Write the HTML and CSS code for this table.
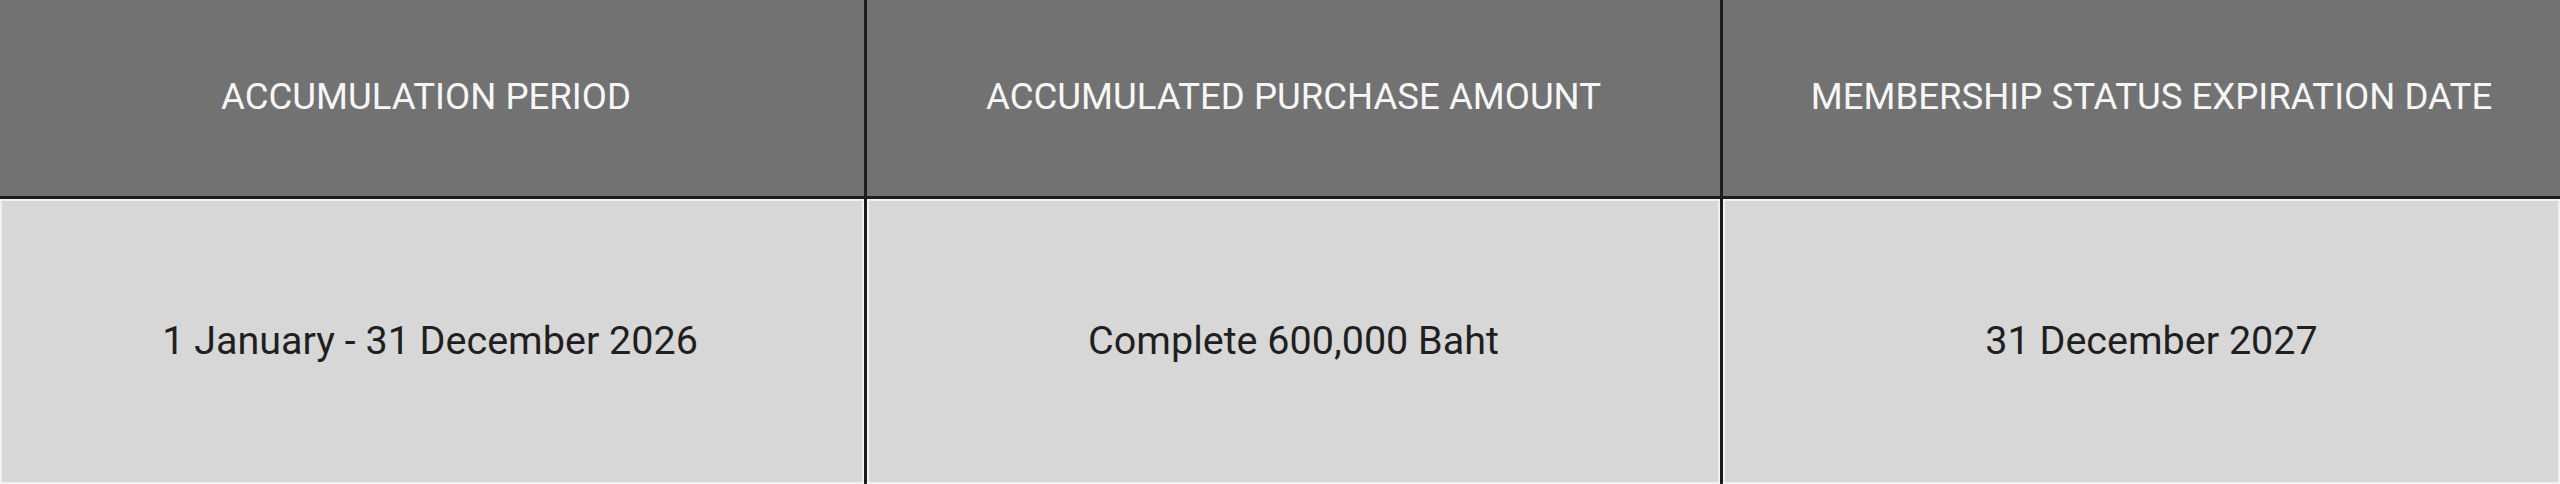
FILE: index.html
```html
<!DOCTYPE html>
<html lang="en">
<head>
<meta charset="utf-8">
<title>Membership Accumulation</title>
<link rel="stylesheet" href="styles.css">
</head>
<body>
<div class="table">
  <div class="cell head first">ACCUMULATION PERIOD</div>
  <div class="cell head">ACCUMULATED PURCHASE AMOUNT</div>
  <div class="cell head last">MEMBERSHIP STATUS EXPIRATION DATE</div>
  <div class="cell body first">1 January - 31 December 2026</div>
  <div class="cell body">Complete 600,000 Baht</div>
  <div class="cell body last">31 December 2027</div>
</div>
</body>
</html>
```
FILE: styles.css
```css
html, body {
  margin: 0;
  padding: 0;
  background: #d6d6d6;
}
.table {
  display: grid;
  grid-template-columns: 864px 853px 1fr;
  grid-template-rows: 196px 285px;
  gap: 3px;
  background: #1c1c1c;
  height: 484px;
  font-family: Roboto, "Liberation Sans", sans-serif;
}
.cell {
  display: flex;
  align-items: center;
  justify-content: center;
  text-align: center;
}
.head {
  background: #727272;
  color: #f7f7f7;
  font-size: 36.6px;
  padding-bottom: 3px;
}
.body {
  background: #d7d7d7;
  color: #1f1f1f;
  font-size: 39.5px;
  box-shadow: inset 0 0 0 2px #f2f2f2;
  padding-bottom: 2px;
}
.head.first {
  padding-right: 12px;
}
.head.last {
  padding-left: 20px;
}
.body.first {
  padding-right: 4px;
}
.body.last {
  padding-left: 20px;
}
```
